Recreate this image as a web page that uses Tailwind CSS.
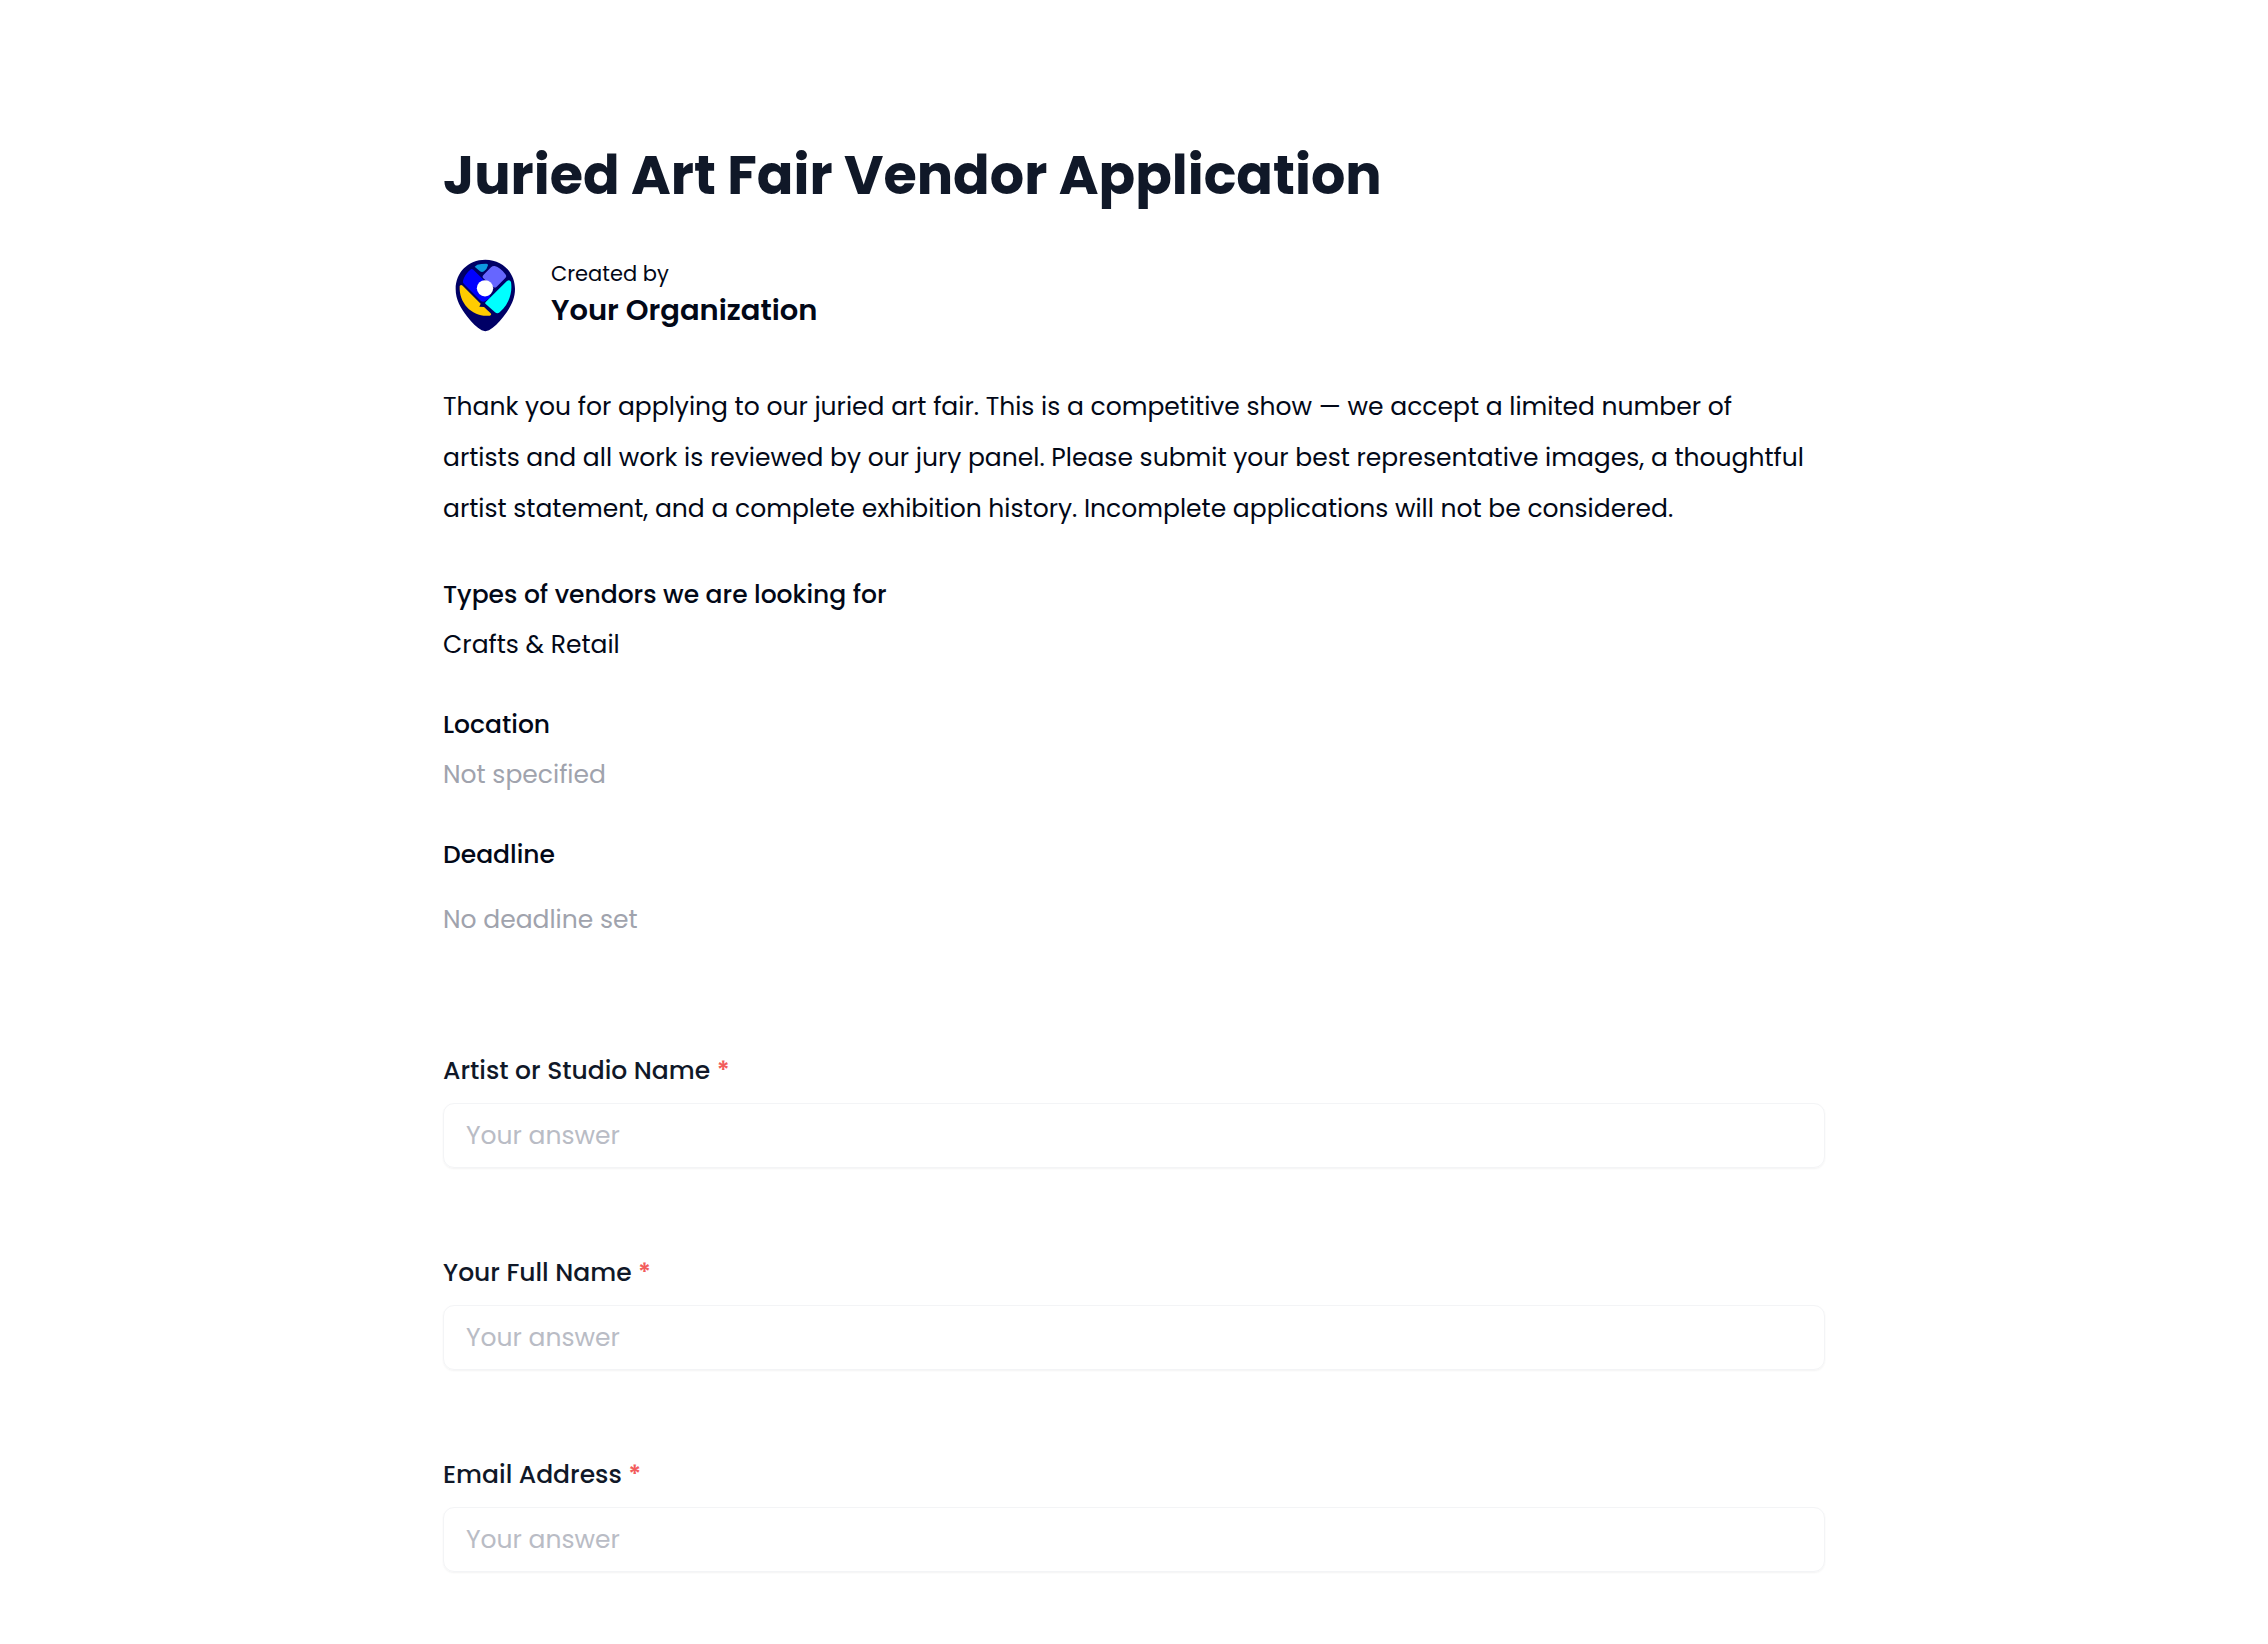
<!DOCTYPE html>
<html lang="en">
<head>
    <meta charset="UTF-8">
    <meta name="viewport" content="width=device-width, initial-scale=1.0">
    <title>Juried Art Fair Vendor Application</title>
    <script src="https://cdn.jsdelivr.net/npm/@tailwindcss/browser@4"></script>
</head>
<body class="bg-white font-['Poppins','Inter',sans-serif] text-[25px] leading-[50px] text-[#020817]">
    <main class="mx-auto max-w-[1382px] pt-[140px] pb-16">
        <!-- Header -->
        <h1 class="text-[54px] leading-[70px] font-bold text-gray-900">Juried Art Fair Vendor Application</h1>

        <div class="mt-[42px] flex items-center gap-[22px]">
            <svg class="size-[86px] shrink-0" viewBox="39 36 258 258" role="img" aria-label="Logo">
                <path fill="#000066" d="M166 59C114 59 77 98 77 147c0 32 15 58 35 83 14 18 28 32 43 41q11 5 22 0c15-9 29-23 43-41 20-25 35-51 35-83 0-49-37-88-89-88z"/>
                <path fill="#0d99e0" d="M134 80q6-7 20-8l15-1q6 0 5 5-3 12-12 18-6 4-12 0z"/>
                <path fill="#0000ff" d="M121 89q4-4 9 0l50 50v34l-14 10q-7 5-14-1l-50-50q-5-4-3-10 6-20 22-33z"/>
                <path fill="#6666ff" d="M161 104l22-22q5-5 11-4 17 5 31 23 7 7 1 13l-26 26q-4 4-10 2l-30-27q-5-5 1-11z"/>
                <path fill="#00ffff" d="M168 185l62-61q9-7 13 2c5 32-6 66-34 91q-7 6-14 0l-27-24q-5-4 0-8z"/>
                <path fill="#ffcc00" d="M89 138q4-6 9-1l54 54-4 9 14 1 20 19q4 5-3 7c-49 6-93-35-90-89z"/>
                <circle cx="165" cy="145" r="24.500" fill="#fff"/>
            </svg>
            <div class="pb-0.5">
                <p class="text-[21px] leading-8">Created by</p>
                <p class="text-[29px] leading-10 font-semibold">Your Organization</p>
            </div>
        </div>

        <p class="mt-[43px] pr-4 leading-[51px]">Thank you for applying to our juried art fair. This is a competitive show — we accept a limited number of artists and all work is reviewed by our jury panel. Please submit your best representative images, a thoughtful artist statement, and a complete exhibition history. Incomplete applications will not be considered.</p>

        <!-- Event details -->
        <dl class="mt-9">
            <dt class="font-medium">Types of vendors we are looking for</dt>
            <dd>Crafts &amp; Retail</dd>
            <dt class="mt-[30px] font-medium">Location</dt>
            <dd class="text-[#a0a3ad]">Not specified</dd>
            <dt class="mt-[30px] font-medium">Deadline</dt>
            <dd class="mt-[15px] text-[#a0a3ad]">No deadline set</dd>
        </dl>

        <!-- Questions -->
        <form class="mt-[101px] flex flex-col gap-20">
            <div>
                <label for="studio" class="block font-medium text-gray-900">Artist or Studio Name <span class="font-semibold text-[#f25c5c]">*</span></label>
                <input id="studio" type="text" placeholder="Your answer" required class="mt-[7px] block h-[65px] w-full rounded-[11px] border border-gray-100 px-[22px] shadow-xs placeholder:text-[#b9bcc5]">
            </div>
            <div>
                <label for="fullname" class="block font-medium text-gray-900">Your Full Name <span class="font-semibold text-[#f25c5c]">*</span></label>
                <input id="fullname" type="text" placeholder="Your answer" required class="mt-[7px] block h-[65px] w-full rounded-[11px] border border-gray-100 px-[22px] shadow-xs placeholder:text-[#b9bcc5]">
            </div>
            <div>
                <label for="email" class="block font-medium text-gray-900">Email Address <span class="font-semibold text-[#f25c5c]">*</span></label>
                <input id="email" type="email" placeholder="Your answer" required class="mt-[7px] block h-[65px] w-full rounded-[11px] border border-gray-100 px-[22px] shadow-xs placeholder:text-[#b9bcc5]">
            </div>
        </form>
    </main>
</body>
</html>
